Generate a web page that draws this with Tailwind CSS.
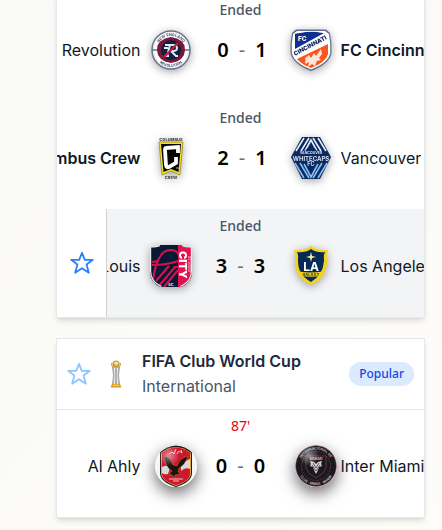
<!DOCTYPE html>
<html lang="en">
<head>
<meta charset="utf-8">
<meta name="viewport" content="width=device-width, initial-scale=1">
<title>Matches</title>
<script src="https://cdn.jsdelivr.net/npm/@tailwindcss/browser@4"></script>
</head>
<body class="min-h-screen overflow-hidden bg-linear-to-br from-[#f9f9f8] to-[#fdfcf7] font-['Inter','Noto_Sans',sans-serif] text-base text-gray-900">
<main class="flex flex-col gap-5 pr-[17px] pl-14">

  <section class="-mt-[7px] overflow-hidden border border-t-0 border-gray-200 bg-white shadow-md" aria-label="Major League Soccer">
    <article class="flex flex-col pt-[7px] pb-[21px]">
      <p class="text-center font-['Noto_Sans',sans-serif] text-sm leading-5 font-medium text-gray-600">Ended</p>
      <div class="grid h-15 grid-cols-[minmax(0,1fr)_200px_minmax(0,1fr)] items-center">
        <span class="flex justify-end overflow-hidden whitespace-nowrap">New England Revolution</span>
        <div class="flex items-center justify-between">
          <span class="flex w-15 justify-center">
            <svg class="size-[42px] drop-shadow-[0_2px_4px_rgb(0_0_0/0.35)]" viewBox="0 0 42 42" role="img" aria-label="New England Revolution crest">
              <defs><path id="ne-top" d="M7 21a14 14 0 0 1 28 0"/><path id="ne-bottom" d="M4 21a17 17 0 0 0 34 0"/></defs>
              <circle cx="21" cy="21" r="19" fill="#fff" stroke="#64748b" stroke-width="1.5"/>
              <circle cx="21" cy="21" r="17.3" fill="none" stroke="#d5dae3" stroke-width=".6"/>
              <g font-family="Inter" font-size="3.8" font-weight="700" fill="#44506b" text-anchor="middle">
                <text><textPath href="#ne-top" startOffset="50%">NEW ENGLAND</textPath></text>
                <text><textPath href="#ne-bottom" startOffset="50%">REVOLUTION</textPath></text>
              </g>
              <path d="M2 21h6M34 21h6" stroke="#64748b" stroke-width="1.4"/>
              <path d="M21 8l6 1.500 5 3 2.500 4 .5 4.500-1 5-3 4-4 2.500-6 1.500-6-1.500-4-2.500-3-4-1-5 .5-4.500 2.500-4 5-3z" fill="#7d1638"/>
              <circle cx="21" cy="21" r="10" fill="#0d2145"/>
              <path d="M15 16h8q4 0 4 3t-4 3h-4M20 16l-3 11m-3 0h5m2-5 5 5h2M14 19h4" fill="none" stroke="#e5e9f1" stroke-width="2"/>
              <path d="M14 28 28 14" stroke="#d9162e" stroke-width="2.3"/>
            </svg>
          </span>
          <div class="flex w-20 items-center justify-center gap-2.5 pl-[3px] font-['Noto_Sans',sans-serif] text-xl font-semibold text-black"><span>0</span><span class="font-normal text-gray-500">-</span><span>1</span></div>
          <span class="flex w-15 justify-center">
            <svg class="size-[42px] drop-shadow-[0_2px_4px_rgb(0_0_0/0.35)]" viewBox="0 0 42 42" role="img" aria-label="FC Cincinnati crest">
              <defs><clipPath id="fcc"><path d="M21 2 38 5q1.500 9 1.500 19Q37 34 21 40.500 5 34 2.500 24q0-10 1.500-19z"/></clipPath></defs>
              <path d="M6 .6h30L40 4q2 10 1.500 20-2 11-20.500 18Q3 35 .5 24 0 14 2 4z" fill="#5e6d89"/>
              <path d="M7 2h28l4 3q1.800 9 1.300 19-2 10-19.300 16.500Q4 34 1.800 24 1.200 14 3 5z" fill="#fff"/>
              <g clip-path="url(#fcc)">
                <path d="M5 4Q20 2 36 3L5 20z" fill="#10308f"/>
                <path d="M38 15 38 25q-2 8-17 14Q11 35 7 30z" fill="#fb551b"/>
              </g>
              <text x="8" y="12" font-family="Inter" font-size="6.5" font-weight="800" fill="#fff">FC</text>
              <text transform="translate(5 27) rotate(-28)" font-family="Inter" font-size="6" font-weight="900" fill="#172b64">CINCINNATI</text>
              <path d="m15 29 4-3 2 3 3-5 2 3 5-7 1 5-3 4 2 2-4 1-2 5-3-2-4 3 1-5-3 1zm-1 4 4-1-1 3z" fill="#ffe6da"/>
            </svg>
          </span>
        </div>
        <span class="overflow-hidden font-semibold whitespace-nowrap">FC Cincinnati</span>
      </div>
    </article>

    <article class="flex flex-col pt-[7px] pb-[21px]">
      <p class="text-center font-['Noto_Sans',sans-serif] text-sm leading-5 font-medium text-gray-600">Ended</p>
      <div class="grid h-15 grid-cols-[minmax(0,1fr)_200px_minmax(0,1fr)] items-center">
        <span class="flex justify-end overflow-hidden font-semibold whitespace-nowrap">Columbus Crew</span>
        <div class="flex items-center justify-between">
          <span class="flex w-15 justify-center">
            <svg class="size-[42px] drop-shadow-[0_2px_4px_rgb(0_0_0/0.35)]" viewBox="0 0 42 42" role="img" aria-label="Columbus Crew crest">
              <g font-family="Inter" font-weight="900" fill="#555" text-anchor="middle">
                <text x="21" y="4" font-size="4">COLUMBUS</text><text x="21" y="41.500" font-size="4">CREW</text>
              </g>
              <path d="M9 5h24l-3 33-9-4-9 4z" fill="#f5df27" stroke="#77701d" stroke-width=".6"/>
              <path d="M11 7h20l-2.500 28-7.500-3-7.500 3z" fill="#050505"/>
              <path d="M28 16v-6l-12 1q-1 0-1 2l1 15q0 3 3 2l7-4v-6" fill="none" stroke="#fff" stroke-width="3.800"/>
              <path d="M26 31h3" stroke="#aaa"/>
            </svg>
          </span>
          <div class="flex w-20 items-center justify-center gap-2.5 pl-[3px] font-['Noto_Sans',sans-serif] text-xl font-semibold text-black"><span>2</span><span class="font-normal text-gray-500">-</span><span>1</span></div>
          <span class="flex w-15 justify-center">
            <svg class="size-[42px] drop-shadow-[0_2px_4px_rgb(0_0_0/0.35)]" viewBox="0 0 42 42" role="img" aria-label="Vancouver Whitecaps crest">
              <path d="M12 0h18l11 20-11 22H12L1 20z" fill="#0b2961"/>
              <path d="m6 14 8-13M11 14l8-13M15 14l6-11 6 11M23 1l8 13M28 1l8 13" fill="none" stroke="#e7edf7" stroke-width="1.600"/>
              <path d="m5 26 9 15M10 26l9 15M14 27l7 13 7-13M23 41l9-15M28 41l9-15" fill="none" stroke="#86bdf1" stroke-width="1.600"/>
              <path d="m21 7 11 13-11 14L10 20z" fill="#0b2961"/>
              <path d="M5 15h32l3 5-3 5H5l-3-5z" fill="#0b2961"/>
              <g font-family="Inter" font-weight="700" fill="#d6dfef" text-anchor="middle">
                <text x="21" y="17" font-size="3.500">VANCOUVER</text><text x="21" y="23.500" font-size="6">WHITECAPS</text><text x="21" y="29" font-size="5.500">FC</text>
              </g>
            </svg>
          </span>
        </div>
        <span class="overflow-hidden whitespace-nowrap">Vancouver Whitecaps</span>
      </div>
    </article>

    <article class="relative flex flex-col bg-gray-100 pt-[7px] pb-[21px]">
      <p class="text-center font-['Noto_Sans',sans-serif] text-sm leading-5 font-medium text-gray-600">Ended</p>
      <div class="grid h-15 grid-cols-[minmax(0,1fr)_200px_minmax(0,1fr)] items-center">
        <span class="flex justify-end overflow-hidden whitespace-nowrap">St. Louis</span>
        <div class="flex items-center justify-between">
          <span class="flex w-15 justify-center">
            <svg class="size-[42px] drop-shadow-[0_2px_4px_rgb(0_0_0/0.35)]" viewBox="0 0 42 42" role="img" aria-label="St. Louis City crest">
              <defs><clipPath id="stl"><path d="M0 2Q7 2 10 0h22q3 2 10 2v24q0 12-11 16H11Q0 38 0 26z"/></clipPath></defs>
              <g clip-path="url(#stl)">
                <path d="M0 0h42v42H0z" fill="#071936"/><path d="M28 0h14v42H28z" fill="#e2124f"/>
                <path d="M2 42Q6 5 20 5q7 0 9 5M2 17l6-1M2 20q15 0 26-4M8 42l17-20h3M14 42l14-17M6 36l13-15" fill="none" stroke="#d3134c" stroke-width="2.200"/>
                <text transform="translate(29 6) rotate(90)" font-family="Inter" font-size="11" font-weight="900" fill="#fff">CITY</text>
                <text transform="translate(37.500 11) rotate(90)" font-family="Inter" font-size="3.500" font-weight="700" fill="#f8b7ca">ST LOUIS</text>
                <text x="21" y="41" text-anchor="middle" font-family="Inter" font-size="4" font-weight="700" fill="#dce1e8">SC</text>
              </g>
              <path d="M10 .5Q7 2 .6 2v24q0 11 11 15.500M32 .5q3 1.500 9.400 1.500v24q0 11-11 15.500" fill="none" stroke="#e7ebf0" stroke-width="1.200"/>
            </svg>
          </span>
          <div class="flex w-20 items-center justify-center gap-2.5 font-['Noto_Sans',sans-serif] text-xl font-semibold text-black"><span>3</span><span class="font-normal text-gray-500">-</span><span>3</span></div>
          <span class="flex w-15 justify-center">
            <svg class="size-[42px] drop-shadow-[0_2px_4px_rgb(0_0_0/0.35)]" viewBox="0 0 42 42" role="img" aria-label="Los Angeles Galaxy crest">
              <path d="M21 1q6 5 17 4-2 5-1 11 0 17-16 24Q5 33 5 16 6 10 4 5q11 1 17-4z" fill="#f5d11d"/>
              <path d="M21 4q6 4 14 3-2 4-1 9-1 14-13 21Q8 30 8 16 9 11 7 7q8 1 14-3z" fill="#052a58"/>
              <path d="m21 7 1 4 4 1-4 1-1 4-1-4-4-1 4-1z" fill="#fff38a"/>
              <text x="21" y="25.500" text-anchor="middle" font-family="Inter" font-size="12" font-weight="700" fill="#fff">LA</text>
              <path d="M9 26.500q12 2 24 0l-2 4.500q-10 1.500-20 0z" fill="#f5d11d"/>
              <text x="21" y="30.500" text-anchor="middle" font-family="Inter" font-size="3.800" font-weight="900" fill="#594d20">GALAXY</text>
            </svg>
          </span>
        </div>
        <span class="overflow-hidden whitespace-nowrap">Los Angeles Galaxy</span>
      </div>
      <button type="button" aria-label="Follow match" class="absolute inset-y-0 left-0 flex w-[50px] items-center justify-center border-r border-stone-300 bg-white text-blue-500">
        <svg class="size-6" viewBox="0 0 24 24" fill="none" stroke="currentColor" stroke-width="1.800" stroke-linejoin="round" aria-hidden="true"><path d="m12 1.800 2.800 7h8l-6.200 4.700 2.200 8.200L12 17.200l-6.800 4.500 2.200-8.200-6.200-4.700h8z"/></svg>
      </button>
    </article>
  </section>

  <section class="overflow-hidden border border-gray-200 bg-white shadow-md" aria-label="FIFA Club World Cup">
    <header class="flex items-center border-b border-gray-200 p-2.5">
      <button type="button" aria-label="Follow competition" class="text-blue-300">
        <svg class="size-6" viewBox="0 0 24 24" fill="none" stroke="currentColor" stroke-width="1.800" stroke-linejoin="round" aria-hidden="true"><path d="m12 1.800 2.800 7h8l-6.200 4.700 2.200 8.200L12 17.200l-6.800 4.500 2.200-8.200-6.200-4.700h8z"/></svg>
      </button>
      <svg class="mx-2.5 size-[30px]" viewBox="0 0 30 30" role="img" aria-label="Club World Cup trophy">
        <path d="M11.500 8q2 9 0 17h7q-2-8 0-17z" fill="#b9b9be"/>
        <path d="M13.500 9q1 8 0 16M16.500 9q-1 8 0 16" fill="none" stroke="#f1f1f4" stroke-width="1"/>
        <path d="M11.500 8q2 9 0 17M15 10v15M18.500 8q-2 9 0 17" fill="none" stroke="#85858d" stroke-width=".7"/>
        <circle cx="15" cy="5" r="3.600" fill="#c99a3c"/><path d="M12.500 4q3-3 5 0l-2 3z" fill="#f5dfac"/>
        <path d="M10.500 4q0 3 2 5M19.500 4q0 3-2 5" fill="none" stroke="#d3a643" stroke-width="1.200"/>
        <path d="M11 25h8l1.500 3.500h-11z" fill="#d99c29"/><path d="M12 26.300h6" stroke="#f7d887"/>
      </svg>
      <div class="min-w-0 flex-1 pl-px">
        <h2 class="leading-[25px] font-semibold text-gray-800">FIFA Club World Cup</h2>
        <p class="leading-[25px] text-gray-600">International</p>
      </div>
      <span class="rounded-full bg-blue-100 px-2.5 py-1 font-['Noto_Sans',sans-serif] text-xs font-medium text-blue-700">Popular</span>
    </header>
    <article class="flex flex-col pt-1.5 pb-[21px]">
      <p class="text-center font-['Noto_Sans',sans-serif] text-sm leading-5 text-red-600">87'</p>
      <div class="grid h-15 grid-cols-[minmax(0,1fr)_200px_minmax(0,1fr)] items-center">
        <span class="flex justify-end overflow-hidden whitespace-nowrap">Al Ahly</span>
        <div class="flex items-center justify-between">
          <span class="flex w-15 justify-end pr-1">
            <svg class="size-[42px] rounded-full shadow-[0_6px_16px_rgb(0_0_0/0.6)]" viewBox="0 0 42 42" role="img" aria-label="Al Ahly crest">
              <defs><radialGradient id="shine" cx=".33" cy=".25" r=".25"><stop stop-color="#fff" stop-opacity=".5"/><stop offset="1" stop-color="#fff" stop-opacity="0"/></radialGradient></defs>
              <circle cx="21" cy="21" r="21" fill="#f6f6f6"/>
              <path d="M5 7Q21-6 37 7v21q0 9-16 14Q5 37 5 28z" fill="#201c17"/>
              <path d="M6 8Q21-4 36 8v20q0 8-15 13Q6 36 6 28z" fill="#dfa52e"/>
              <path d="M7 8Q21-3 35 8v20q0 8-14 12Q7 36 7 28z" fill="#cf1630"/>
              <path d="M7 22q6-3 8 1l-2 6q-4 1-6-1zM26 18l9-4v10q-5-2-9 2z" fill="#d8d8d8"/>
              <path d="M9 11q7 1 9 9l4 1q3-8 11-10-3 9-9 12l-1 4 3 2-6 1 1 3-4-3-3-1 3-3q-6-3-8-15z" fill="#19130e" stroke="#b38222" stroke-width=".5"/>
              <path d="m14 9 3-2 2 2 2-5m1 5 2-3 3 2-1-3M14 34h14M18 36h6" fill="none" stroke="#ecc3c5"/>
              <circle cx="21" cy="21" r="21" fill="url(#shine)"/>
            </svg>
          </span>
          <div class="flex w-20 items-center justify-center gap-2.5 font-['Noto_Sans',sans-serif] text-xl font-semibold text-black"><span>0</span><span class="font-normal text-gray-500">-</span><span>0</span></div>
          <span class="flex w-15 justify-end pr-1">
            <svg class="size-[42px] rounded-full shadow-[0_6px_16px_rgb(0_0_0/0.6)]" viewBox="0 0 42 42" role="img" aria-label="Inter Miami crest">
              <defs><path id="im-top" d="M4.500 21a16.500 16.500 0 0 1 33 0"/><path id="im-bottom" d="M2 21a19 19 0 0 0 38 0"/></defs>
              <circle cx="21" cy="21" r="20.500" fill="#1b191b" stroke="#b0668f" stroke-width=".8"/>
              <circle cx="21" cy="21" r="14.500" fill="none" stroke="#8c4d73" stroke-width=".6" stroke-dasharray="1.500 1"/>
              <g font-family="Inter" font-size="3.500" font-weight="700" fill="#b9b2b7" text-anchor="middle">
                <text><textPath href="#im-top" startOffset="50%">INTERNACIONAL DE</textPath></text>
                <text><textPath href="#im-bottom" startOffset="50%">CLUB · MMXX · MIAMI</textPath></text>
                <text x="21" y="14.500" font-size="4" fill="#e59ac5">MIAMI</text>
              </g>
              <path d="M11 11h20v12q-2 6-10 10-8-4-10-10z" fill="none" stroke="#8e4773" stroke-width=".6"/>
              <path d="m15 16 4 1 2 2 2-2 4-1-1 3 1 2-3 1-1 3-2 4-2-4-1-3-3-1 1-2z" fill="#d8d4d7"/><path d="m18 18 3 5 3-5M17 20l4 6 4-6" fill="none" stroke="#3c353a" stroke-width=".8"/>
              <circle cx="21" cy="21" r="21" fill="url(#shine)"/>
            </svg>
          </span>
        </div>
        <span class="overflow-hidden whitespace-nowrap">Inter Miami CF</span>
      </div>
    </article>
  </section>
</main>
</body>
</html>
